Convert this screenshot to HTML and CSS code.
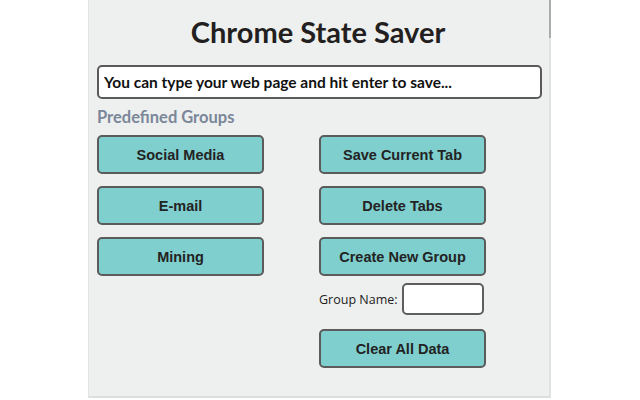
FILE: index.html
```html
<!DOCTYPE html>
<html lang="en">
<head>
    <meta charset="UTF-8">
    <meta name="viewport" content="width=device-width, initial-scale=1.0">
    <title>Chrome State Saver</title>
    <link rel="stylesheet" href="styles.css">
</head>
<body>
    <div class="popup">
        <h1>Chrome State Saver</h1>
        <input type="text" class="url-input" placeholder="You can type your web page and hit enter to save...">
        <div class="section-label">Predefined Groups</div>

        <div class="columns">
            <div class="column">
                <button>Social Media</button>
                <button>E-mail</button>
                <button>Mining</button>
            </div>
            <div class="column">
                <button>Save Current Tab</button>
                <button>Delete Tabs</button>
                <button>Create New Group</button>
                <div class="group-row">
                    <label for="groupName">Group Name:</label>
                    <input type="text" id="groupName" class="group-input">
                </div>
                <button class="clear-btn">Clear All Data</button>
            </div>
        </div>
    </div>
</body>
</html>
```

FILE: styles.css
```css
body {
    margin: 0;
    background-color: #ffffff;
    font-family: 'Lato', sans-serif;
    color: #222;
}
.popup {
    position: relative;
    box-sizing: border-box;
    width: 463px;
    height: 398px;
    margin-left: 88px;
    padding: 0 10px 0 8px;
    background-color: #eef0ef;
    border-left: 1px solid #e2e4e3;
    border-right: 2px solid #e0e2e1;
    border-bottom: 2px solid #dcdedd;
}
/* scrollbar thumb */
.popup::after {
    content: "";
    position: absolute;
    top: 0;
    right: -2px;
    width: 2px;
    height: 38px;
    background-color: #a9abad;
}
h1 {
    margin: 0;
    padding-top: 14px;
    height: 50px;
    box-sizing: border-box;
    text-align: center;
    font-size: 29px;
    font-weight: 700;
    color: #231f20;
}
.url-input {
    box-sizing: border-box;
    display: block;
    width: 445px;
    height: 34px;
    margin-top: 15px;
    padding: 0 5px;
    border: 2px solid #5a5a5a;
    border-radius: 5px;
    background-color: #ffffff;
    font-family: 'Lato', sans-serif;
    font-size: 15.5px;
    font-weight: 700;
}
.url-input::placeholder {
    color: #111;
    opacity: 1;
}
.section-label {
    margin-top: 8px;
    font-size: 16.5px;
    font-weight: 700;
    color: #7b8799;
}
.columns {
    display: flex;
    gap: 55px;
    margin-top: 8px;
}
.column {
    display: flex;
    flex-direction: column;
    width: 167px;
}
button {
    box-sizing: border-box;
    width: 167px;
    height: 39px;
    margin-bottom: 12px;
    border: 2px solid #5b5b5b;
    border-radius: 5px;
    background-color: #7ecfce;
    font-family: 'Liberation Sans', Arial, sans-serif;
    font-size: 14.5px;
    font-weight: 700;
    color: #232323;
    cursor: pointer;
}
.group-row {
    display: flex;
    align-items: center;
    gap: 4px;
    margin-top: -5px;
    margin-bottom: 14px;
}
.group-row label {
    font-family: 'Open Sans', sans-serif;
    font-size: 12.5px;
    color: #222;
}
.group-input {
    box-sizing: border-box;
    width: 82px;
    height: 32px;
    border: 2px solid #5e5e5e;
    border-radius: 5px;
    background-color: #ffffff;
}
```
